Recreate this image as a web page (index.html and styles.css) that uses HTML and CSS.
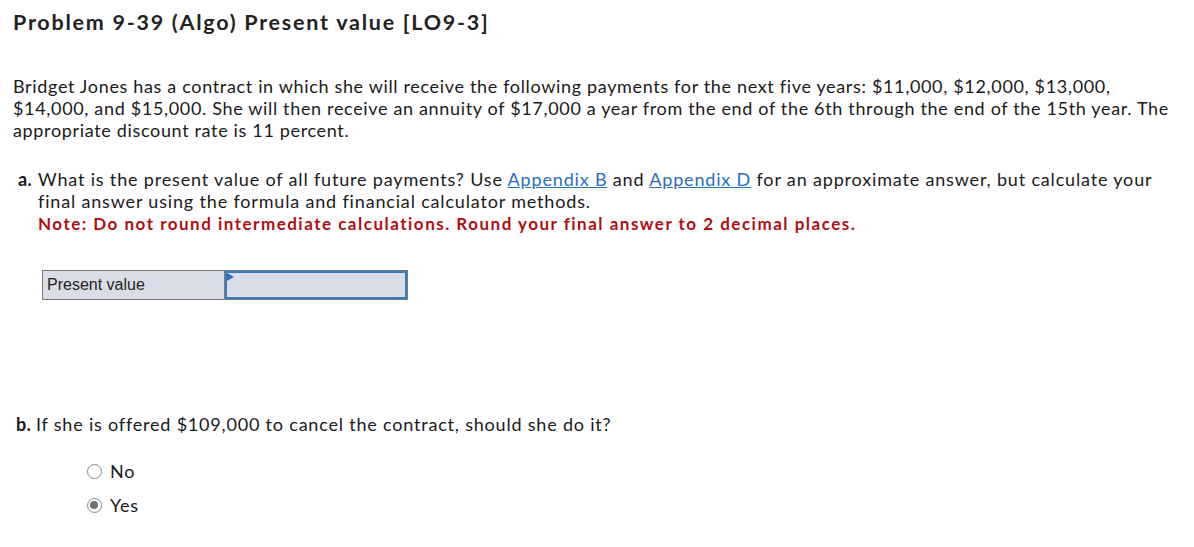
FILE: index.html
```html
<!DOCTYPE html>
<html>
<head>
<meta charset="utf-8">
<link rel="stylesheet" href="styles.css">
</head>
<body>
<div class="page">
  <h1 class="title">Problem 9-39 (Algo) Present value [LO9-3]</h1>
  <p class="intro">Bridget Jones has a contract in which she will receive the following payments for the next five years: $11,000, $12,000, $13,000,<br>$14,000, and $15,000. She will then receive an annuity of $17,000 a year from the end of the 6th through the end of the 15th year. The<br>appropriate discount rate is 11 percent.</p>
  <div class="part part-a">
    <span class="label">a.</span>
    <div class="part-body">
      <div>What is the present value of all future payments? Use <a class="link">Appendix B</a> and <a class="link">Appendix D</a> for an approximate answer, but calculate your<br>final answer using the formula and financial calculator methods.</div>
      <div class="note">Note: Do not round intermediate calculations. Round your final answer to 2 decimal places.</div>
    </div>
  </div>
  <div class="answer-table">
    <div class="cell-label">Present value</div>
    <div class="cell-input"><span class="flag"></span></div>
  </div>
  <div class="part part-b">
    <span class="label">b.</span>
    <div class="part-body">If she is offered $109,000 to cancel the contract, should she do it?</div>
  </div>
  <div class="options">
    <div class="option"><span class="radio"></span><span>No</span></div>
    <div class="option"><span class="radio checked"></span><span>Yes</span></div>
  </div>
</div>
</body>
</html>
```
FILE: styles.css
```css
html, body { margin: 0; padding: 0; background: #fff; }
body { font-family: Lato, "Open Sans", sans-serif; color: #1a1a1a; }
.page { padding: 8px 13px 0 13px; }
.title { font-size: 21.5px; font-weight: 700; margin: 0; line-height: 28px; color: #222; letter-spacing: 1.75px; }
.intro { font-size: 18px; line-height: 22px; margin: 39px 0 0 0; white-space: nowrap; letter-spacing: 0.66px; }
.part { display: flex; font-size: 18px; line-height: 22px; white-space: nowrap; letter-spacing: 0.7px; }
.part-a { margin-top: 27px; padding-left: 5px; letter-spacing: 0.83px; }
.label { font-weight: 700; width: 20px; flex: none; letter-spacing: 0.3px; }
.link { color: #2a6ebb; text-decoration: underline; }
.note { color: #b00d12; font-weight: 700; font-size: 17px; letter-spacing: 1.5px; margin-top: 1px; }
.answer-table { display: flex; margin: 35px 0 0 29px; width: 366px; height: 30px; border: 1px solid #7a7a7a; background: #d9dde8; box-sizing: border-box; letter-spacing: 0; }
.cell-label { width: 182px; font-family: "Liberation Sans", Arial, sans-serif; font-size: 16px; line-height: 28px; padding-left: 4px; border-right: 1px solid #7a7a7a; box-sizing: border-box; color: #222; }
.cell-input { flex: 1; border: 2px solid #3b7bc6; position: relative; }
.flag { position: absolute; left: 0; top: 0; width: 0; height: 0; border-top: 4px solid transparent; border-bottom: 4px solid transparent; border-left: 7px solid #2f6fc2; }
.part-b { margin-top: 113px; padding-left: 3px; letter-spacing: 0.8px; }
.options { margin: 25px 0 0 74px; display: flex; flex-direction: column; gap: 12px; }
.option { display: flex; align-items: center; gap: 8px; font-size: 18px; line-height: 22px; letter-spacing: 0.7px; }
.radio { width: 15px; height: 15px; border: 1.5px solid #8a8a8a; border-radius: 50%; box-sizing: border-box; background: #fff; position: relative; }
.radio.checked::after { content: ""; position: absolute; left: 2px; top: 2px; width: 8px; height: 8px; border-radius: 50%; background: #707070; }
```
